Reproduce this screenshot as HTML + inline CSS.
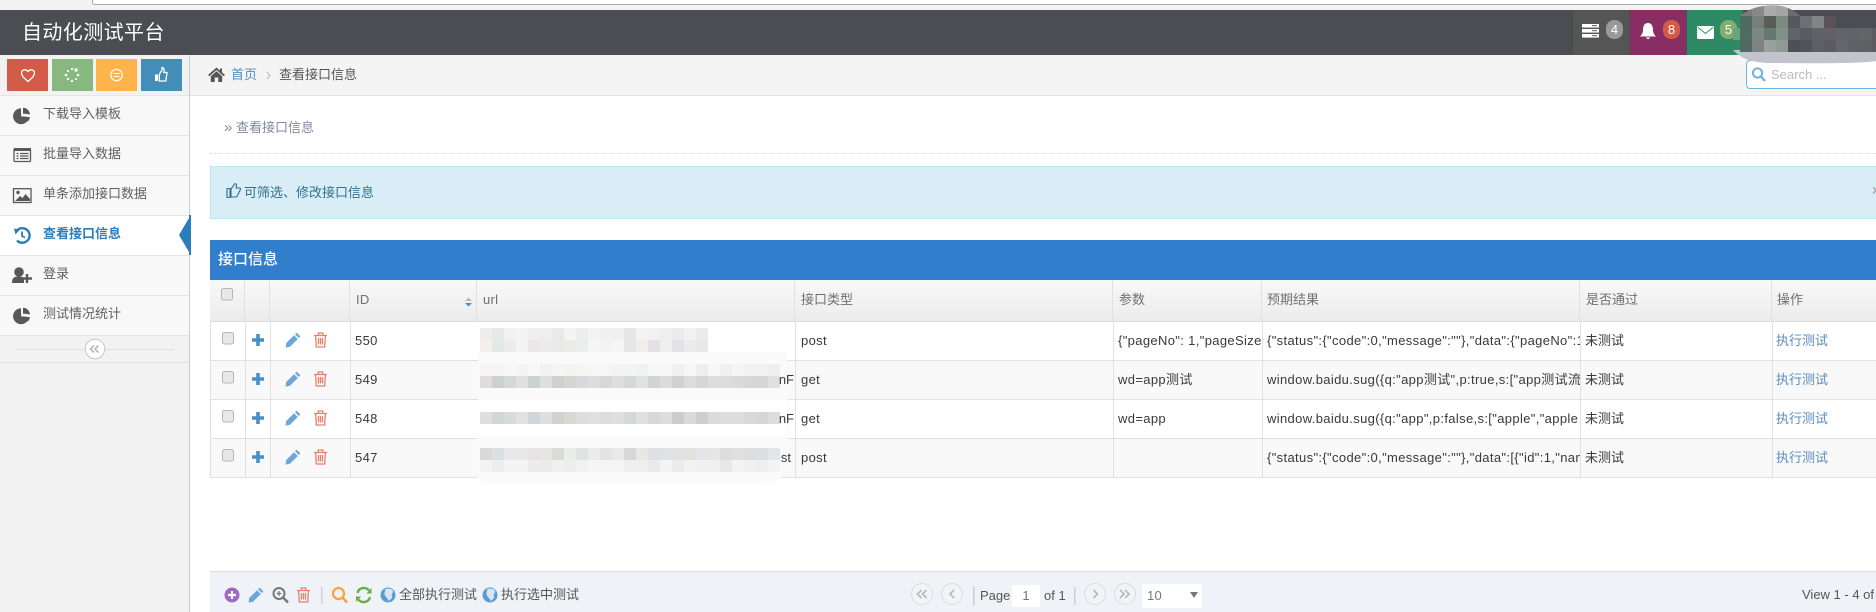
<!DOCTYPE html>
<html lang="zh">
<head>
<meta charset="utf-8">
<title>自动化测试平台</title>
<style>
html,body{margin:0;padding:0;width:1876px;height:612px;overflow:hidden;background:#fff}
body{position:relative;font-family:"Liberation Sans","Noto Sans CJK SC",sans-serif;font-size:13px;color:#393939}
.b{position:absolute}
.t{position:absolute;white-space:nowrap;line-height:20px;height:20px}
.h{color:#707070}
.m{color:#5f5f5f}
.c{overflow:hidden;color:#393939;letter-spacing:.35px}
.l{color:#5a8cbf}
.f{color:#555}
#mos rect{width:12px;height:12px}
#mos2 rect{width:12px;height:12px}
</style>
</head>
<body>
<!-- browser strip -->
<div class="b" style="left:0;top:0;width:1876px;height:10px;background:#f2f2f2"></div>
<div class="b" style="left:92px;top:0;width:1784px;height:4px;background:#fff;border-bottom:1px solid #aaa;border-left:1px solid #aaa;border-bottom-left-radius:3px"></div>
<!-- navbar -->
<div class="b" style="left:0;top:10px;width:1876px;height:45px;background:#4c4d52"></div>
<div class="t" style="left:22px;top:21px;font-size:20px;letter-spacing:.4px;line-height:24px;height:24px;color:#fff">自动化测试平台</div>
<div class="b" style="left:1573px;top:10px;width:56px;height:45px;background:#555"></div>
<div class="b" style="left:1630px;top:10px;width:56px;height:45px;background:#892e65"></div>
<div class="b" style="left:1687px;top:10px;width:56px;height:45px;background:#2e8965"></div>
<div class="t" style="left:1606px;top:20px;width:17px;height:19px;line-height:19px;border-radius:8px;background:#999;color:#fff;text-align:center;font-size:13px">4</div>
<div class="t" style="left:1663px;top:20px;width:17px;height:19px;line-height:19px;border-radius:8px;background:#d15b47;color:#fff;text-align:center;font-size:13px">8</div>
<div class="t" style="left:1720px;top:20px;width:17px;height:19px;line-height:19px;border-radius:8px;background:#82af6f;color:#fff;text-align:center;font-size:13px">5</div>

<!-- sidebar -->
<div class="b" style="left:0;top:55px;width:189px;height:557px;background:#f2f2f2;border-right:1px solid #ccc"></div>
<div class="b" style="left:7px;top:59px;width:41px;height:32px;background:#d15b47"></div>
<div class="b" style="left:52px;top:59px;width:41px;height:32px;background:#87b87f"></div>
<div class="b" style="left:96px;top:59px;width:41px;height:32px;background:#ffb44b"></div>
<div class="b" style="left:141px;top:59px;width:41px;height:32px;background:#438eb9"></div>
<div class="b" style="left:0;top:95px;width:189px;height:240px;background:#f8f8f8"></div>
<div class="b" style="left:0;top:215px;width:189px;height:40px;background:#fff"></div>
<div class="b" style="left:0;top:95px;width:189px;height:1px;background:#e5e5e5"></div>
<div class="b" style="left:0;top:135px;width:189px;height:1px;background:#e5e5e5"></div>
<div class="b" style="left:0;top:175px;width:189px;height:1px;background:#e5e5e5"></div>
<div class="b" style="left:0;top:215px;width:189px;height:1px;background:#e5e5e5"></div>
<div class="b" style="left:0;top:255px;width:189px;height:1px;background:#e5e5e5"></div>
<div class="b" style="left:0;top:295px;width:189px;height:1px;background:#e5e5e5"></div>
<div class="b" style="left:0;top:335px;width:189px;height:1px;background:#e5e5e5"></div>
<div class="b" style="left:0;top:362px;width:189px;height:1px;background:#e0e0e0"></div>
<div class="b" style="left:15px;top:349px;width:159px;height:1px;background:#e0e0e0"></div>
<div class="t m" style="left:43px;top:104px">下载导入模板</div>
<div class="t m" style="left:43px;top:144px">批量导入数据</div>
<div class="t m" style="left:43px;top:184px">单条添加接口数据</div>
<div class="t" style="left:43px;top:224px;color:#2b7dbc;font-weight:bold">查看接口信息</div>
<div class="t m" style="left:43px;top:264px">登录</div>
<div class="t m" style="left:43px;top:304px">测试情况统计</div>

<!-- breadcrumbs -->
<div class="b" style="left:190px;top:55px;width:1686px;height:40px;background:#f4f4f4;border-bottom:1px solid #e5e5e5"></div>
<div class="t" style="left:231px;top:65px;color:#4c8fbd">首页</div>
<div class="t" style="left:279px;top:65px;color:#555">查看接口信息</div>
<div class="b" style="left:1746px;top:60px;width:140px;height:27px;background:#fff;border:1px solid #6fb3e0;border-radius:4px"></div>
<div class="t" style="left:1771px;top:65px;color:#bbb">Search ...</div>

<!-- page header -->
<div class="t" style="left:224px;top:118px;color:#8089a0"><span style="font-size:15px">»</span> 查看接口信息</div>
<div class="b" style="left:210px;top:153px;width:1666px;border-top:1px dotted #d5d5d5"></div>

<!-- alert -->
<div class="b" style="left:210px;top:166px;width:1666px;height:51px;background:#d9edf7;border-top:1px solid #bce8f1;border-left:1px solid #bce8f1;border-bottom:1px solid #bce8f1"></div>
<div class="t" style="left:244px;top:183px;color:#31708f">可筛选、修改接口信息</div>
<div class="t" style="left:1872px;top:180px;color:#a0a8ac;font-size:14px;font-weight:bold">×</div>

<!-- panel -->
<div class="b" style="left:210px;top:240px;width:1666px;height:40px;background:#307ecc"></div>
<div class="t" style="left:218px;top:250px;font-size:15px;color:#fff;font-weight:500">接口信息</div>

<!-- table header -->
<div class="b" style="left:210px;top:280px;width:1666px;height:41px;background:linear-gradient(#f8f8f8,#ececec);border-bottom:1px solid #ddd"></div>
<div class="t h" style="left:356px;top:290px;letter-spacing:.3px">ID</div>
<div class="t h" style="left:483px;top:290px;letter-spacing:.3px">url</div>
<div class="t h" style="left:801px;top:290px">接口类型</div>
<div class="t h" style="left:1119px;top:290px">参数</div>
<div class="t h" style="left:1267px;top:290px">预期结果</div>
<div class="t h" style="left:1586px;top:290px">是否通过</div>
<div class="t h" style="left:1777px;top:290px">操作</div>

<!-- rows backgrounds -->
<div class="b" style="left:210px;top:361px;width:1666px;height:38px;background:#f9f9f9"></div>
<div class="b" style="left:210px;top:439px;width:1666px;height:38px;background:#f9f9f9"></div>
<div class="b" style="left:210px;top:360px;width:1666px;height:1px;background:#e1e1e1"></div>
<div class="b" style="left:210px;top:399px;width:1666px;height:1px;background:#e1e1e1"></div>
<div class="b" style="left:210px;top:438px;width:1666px;height:1px;background:#e1e1e1"></div>
<div class="b" style="left:210px;top:477px;width:1666px;height:1px;background:#e1e1e1"></div>
<!-- column lines header -->
<div class="b" style="left:244px;top:280px;width:1px;height:41px;background:#e1e1e1"></div>
<div class="b" style="left:269px;top:280px;width:1px;height:41px;background:#e1e1e1"></div>
<div class="b" style="left:349px;top:280px;width:1px;height:41px;background:#e1e1e1"></div>
<div class="b" style="left:476px;top:280px;width:1px;height:41px;background:#e1e1e1"></div>
<div class="b" style="left:794px;top:280px;width:1px;height:41px;background:#e1e1e1"></div>
<div class="b" style="left:1112px;top:280px;width:1px;height:41px;background:#e1e1e1"></div>
<div class="b" style="left:1261px;top:280px;width:1px;height:41px;background:#e1e1e1"></div>
<div class="b" style="left:1579px;top:280px;width:1px;height:41px;background:#e1e1e1"></div>
<div class="b" style="left:1771px;top:280px;width:1px;height:41px;background:#e1e1e1"></div>
<!-- column lines body -->
<div class="b" style="left:210px;top:321px;width:1px;height:157px;background:#e1e1e1"></div>
<div class="b" style="left:245px;top:321px;width:1px;height:157px;background:#e1e1e1"></div>
<div class="b" style="left:270px;top:321px;width:1px;height:157px;background:#e1e1e1"></div>
<div class="b" style="left:350px;top:321px;width:1px;height:157px;background:#e1e1e1"></div>
<div class="b" style="left:795px;top:321px;width:1px;height:157px;background:#e1e1e1"></div>
<div class="b" style="left:1113px;top:321px;width:1px;height:157px;background:#e1e1e1"></div>
<div class="b" style="left:1262px;top:321px;width:1px;height:157px;background:#e1e1e1"></div>
<div class="b" style="left:1580px;top:321px;width:1px;height:157px;background:#e1e1e1"></div>
<div class="b" style="left:1772px;top:321px;width:1px;height:157px;background:#e1e1e1"></div>

<!-- row text -->
<div class="t c" style="left:355px;top:331px;width:100px">550</div>
<div class="t c" style="left:355px;top:370px;width:100px">549</div>
<div class="t c" style="left:355px;top:409px;width:100px">548</div>
<div class="t c" style="left:355px;top:448px;width:100px">547</div>

<!-- url mosaic -->
<svg id="mos" class="b" style="left:0;top:0" width="1876" height="612" viewBox="0 0 1876 612">
<rect style="width:316px;height:30px" x="478" y="322" fill="#fff"/>
<path d="M478 352H786Q790 372 788 400Q790 420 788 440Q790 462 784 476Q775 484 740 484H500Q482 484 478 478Z" fill="#fafafa"/>
<rect style="width:309px;height:36px" x="478" y="400" fill="#fff"/>
<g fill="#eee">
<rect x="480" y="328" fill="#efecea"/><rect x="492" y="328" fill="#e6e8e9"/><rect x="504" y="328" fill="#f1f1f0"/><rect x="516" y="328" fill="#f3f4f3"/><rect x="528" y="328" fill="#efeeeb"/><rect x="540" y="328" fill="#eeeeec"/><rect x="552" y="328" fill="#e9e9e8"/><rect x="564" y="328" fill="#f3f5f3"/><rect x="576" y="328" fill="#eceeec"/><rect x="588" y="328" fill="#f3f3f3"/><rect x="600" y="328" fill="#f0f0f0"/><rect x="612" y="328" fill="#f0f0f0"/><rect x="624" y="328" fill="#e6e6e8"/><rect x="636" y="328" fill="#f4f3f0"/><rect x="648" y="328" fill="#f1f1f1"/><rect x="660" y="328" fill="#efefef"/><rect x="672" y="328" fill="#ebebeb"/><rect x="684" y="328" fill="#f1f1f1"/><rect x="696" y="328" fill="#ebebeb"/>
<rect x="480" y="340" fill="#f4efec"/><rect x="492" y="340" fill="#e3e8e9"/><rect x="504" y="340" fill="#ececec"/><rect x="516" y="340" fill="#f4f4f4"/><rect x="528" y="340" fill="#e9e7e7"/><rect x="540" y="340" fill="#eaebea"/><rect x="552" y="340" fill="#e8e9e8"/><rect x="564" y="340" fill="#ebebe9"/><rect x="576" y="340" fill="#ebeeec"/><rect x="588" y="340" fill="#f5f5f5"/><rect x="600" y="340" fill="#f4f3f3"/><rect x="612" y="340" fill="#f5f5f5"/><rect x="624" y="340" fill="#e6e5e8"/><rect x="636" y="340" fill="#eeeeeb"/><rect x="648" y="340" fill="#e3e1e3"/><rect x="660" y="340" fill="#edf0ef"/><rect x="672" y="340" fill="#e3e3e6"/><rect x="684" y="340" fill="#ebebeb"/><rect x="696" y="340" fill="#e8e8e8"/>
<rect x="480" y="364" fill="#f6f5f3"/><rect x="492" y="364" fill="#f5f5f5"/><rect x="504" y="364" fill="#f7f7f7"/><rect x="516" y="364" fill="#f4f4f4"/><rect x="528" y="364" fill="#f8f8f8"/><rect x="540" y="364" fill="#f2f2f2"/><rect x="552" y="364" fill="#f5f5f5"/><rect x="564" y="364" fill="#f3f3f2"/><rect x="576" y="364" fill="#f5f6f4"/><rect x="588" y="364" fill="#f6f6f6"/><rect x="600" y="364" fill="#f6f6f6"/><rect x="612" y="364" fill="#f2f3f3"/><rect x="624" y="364" fill="#f3f5f4"/><rect x="636" y="364" fill="#f0f1f1"/><rect x="648" y="364" fill="#f5f7f7"/><rect x="660" y="364" fill="#f6f6f6"/><rect x="672" y="364" fill="#f0f0f1"/><rect x="684" y="364" fill="#f6f6f6"/><rect x="696" y="364" fill="#eeeeee"/><rect x="708" y="364" fill="#f7f7f7"/><rect x="720" y="364" fill="#f0f0f0"/><rect x="732" y="364" fill="#f5f5f5"/><rect x="744" y="364" fill="#f2f2f0"/><rect x="756" y="364" fill="#f2f2f0"/><rect x="768" y="364" fill="#ecefee"/>
<rect x="480" y="376" fill="#e0dcd9"/><rect x="492" y="376" fill="#cbd0d2"/><rect x="504" y="376" fill="#d5d8d6"/><rect x="516" y="376" fill="#e2e0de"/><rect x="528" y="376" fill="#cad2d4"/><rect x="540" y="376" fill="#dfdfdf"/><rect x="552" y="376" fill="#d0d0cd"/><rect x="564" y="376" fill="#d6d5d1"/><rect x="576" y="376" fill="#d8d9df"/><rect x="588" y="376" fill="#deded9"/><rect x="600" y="376" fill="#d7d7d7"/><rect x="612" y="376" fill="#dededa"/><rect x="624" y="376" fill="#d5d7d9"/><rect x="636" y="376" fill="#dfe2de"/><rect x="648" y="376" fill="#d3d3d5"/><rect x="660" y="376" fill="#dcdbd9"/><rect x="672" y="376" fill="#d0d1d5"/><rect x="684" y="376" fill="#dcdcdc"/><rect x="696" y="376" fill="#d5d7d7"/><rect x="708" y="376" fill="#dddddd"/><rect x="720" y="376" fill="#dddbdb"/><rect x="732" y="376" fill="#dadada"/><rect x="744" y="376" fill="#d7d7d7"/><rect x="756" y="376" fill="#d6d6d6"/><rect x="768" y="376" fill="#e0e0dd"/>
<rect x="480" y="412" fill="#e2dedb"/><rect x="492" y="412" fill="#d0d6d9"/><rect x="504" y="412" fill="#d9dbd9"/><rect x="516" y="412" fill="#e3e1df"/><rect x="528" y="412" fill="#cfd7db"/><rect x="540" y="412" fill="#dfdfdf"/><rect x="552" y="412" fill="#d2d2cf"/><rect x="564" y="412" fill="#d8d8d3"/><rect x="576" y="412" fill="#dcdde2"/><rect x="588" y="412" fill="#e1e1dc"/><rect x="600" y="412" fill="#dcdcdc"/><rect x="612" y="412" fill="#e0dfdc"/><rect x="624" y="412" fill="#d3d9da"/><rect x="636" y="412" fill="#dfe1dd"/><rect x="648" y="412" fill="#d9d6d7"/><rect x="660" y="412" fill="#dfdddb"/><rect x="672" y="412" fill="#cccccd"/><rect x="684" y="412" fill="#dadada"/><rect x="696" y="412" fill="#cdcfce"/><rect x="708" y="412" fill="#dddada"/><rect x="720" y="412" fill="#dddddb"/><rect x="732" y="412" fill="#dddddb"/><rect x="744" y="412" fill="#d7dada"/><rect x="756" y="412" fill="#d6d6d6"/><rect x="768" y="412" fill="#dcdcdc"/>
<rect x="480" y="448" fill="#dcd8d6"/><rect x="492" y="448" fill="#dce0e3"/><rect x="504" y="448" fill="#e7e9e8"/><rect x="516" y="448" fill="#e7e9e8"/><rect x="528" y="448" fill="#e5e4e2"/><rect x="540" y="448" fill="#e5e5e4"/><rect x="552" y="448" fill="#dbdbdb"/><rect x="564" y="448" fill="#ebedeb"/><rect x="576" y="448" fill="#e1e3e3"/><rect x="588" y="448" fill="#ececec"/><rect x="600" y="448" fill="#e5e2e3"/><rect x="612" y="448" fill="#e9e9e9"/><rect x="624" y="448" fill="#d7d6da"/><rect x="636" y="448" fill="#e8e7e3"/><rect x="648" y="448" fill="#e0dfe3"/><rect x="660" y="448" fill="#e0e1e5"/><rect x="672" y="448" fill="#e3e2e3"/><rect x="684" y="448" fill="#e3e2df"/><rect x="696" y="448" fill="#e3e5e7"/><rect x="708" y="448" fill="#e6e6e6"/><rect x="720" y="448" fill="#dddddd"/><rect x="732" y="448" fill="#dfe0df"/><rect x="744" y="448" fill="#dfdede"/><rect x="756" y="448" fill="#dcdedf"/><rect x="768" y="448" fill="#e3e5e7"/>
<rect x="480" y="460" fill="#f3f3f3"/><rect x="492" y="460" fill="#ebeeee"/><rect x="504" y="460" fill="#f4f4f4"/><rect x="516" y="460" fill="#f4f4f4"/><rect x="528" y="460" fill="#ececec"/><rect x="540" y="460" fill="#ebebeb"/><rect x="552" y="460" fill="#f0f0ee"/><rect x="564" y="460" fill="#ededeb"/><rect x="576" y="460" fill="#f0f1f1"/><rect x="588" y="460" fill="#f5f5f5"/><rect x="600" y="460" fill="#f5f5f5"/><rect x="612" y="460" fill="#f5f5f5"/><rect x="624" y="460" fill="#eef0f0"/><rect x="636" y="460" fill="#eeeeee"/><rect x="648" y="460" fill="#e9e9ea"/><rect x="660" y="460" fill="#f4f4f4"/><rect x="672" y="460" fill="#ebebeb"/><rect x="684" y="460" fill="#f0f2f4"/><rect x="696" y="460" fill="#eff1f1"/><rect x="708" y="460" fill="#f0f0ee"/><rect x="720" y="460" fill="#e8e8e8"/><rect x="732" y="460" fill="#f3f3f3"/><rect x="744" y="460" fill="#eff0f0"/><rect x="756" y="460" fill="#edefef"/><rect x="768" y="460" fill="#f4f4f4"/>
</g>
</svg>

<div class="t c" style="left:700px;top:370px;width:94px;text-align:right;letter-spacing:0">nF</div>
<div class="t c" style="left:700px;top:409px;width:94px;text-align:right;letter-spacing:0">nF</div>
<div class="t c" style="left:700px;top:448px;width:91px;text-align:right;letter-spacing:0">st</div>

<div class="t c" style="left:801px;top:331px;width:100px">post</div>
<div class="t c" style="left:801px;top:370px;width:100px">get</div>
<div class="t c" style="left:801px;top:409px;width:100px">get</div>
<div class="t c" style="left:801px;top:448px;width:100px">post</div>
<div class="t c" style="left:1118px;top:331px;width:144px">{"pageNo": 1,"pageSize"</div>
<div class="t c" style="left:1118px;top:370px;width:144px">wd=app测试</div>
<div class="t c" style="left:1118px;top:409px;width:144px">wd=app</div>
<div class="t c" style="left:1267px;top:331px;width:313px">{"status":{"code":0,"message":""},"data":{"pageNo":1,"pageSize"</div>
<div class="t c" style="left:1267px;top:370px;width:313px">window.baidu.sug({q:"app测试",p:true,s:["app测试流程"</div>
<div class="t c" style="left:1267px;top:409px;width:313px">window.baidu.sug({q:"app",p:false,s:["apple","apple</div>
<div class="t c" style="left:1267px;top:448px;width:313px">{"status":{"code":0,"message":""},"data":[{"id":1,"name":""</div>
<div class="t c" style="left:1585px;top:331px;width:100px;letter-spacing:0">未测试</div>
<div class="t c" style="left:1585px;top:370px;width:100px;letter-spacing:0">未测试</div>
<div class="t c" style="left:1585px;top:409px;width:100px;letter-spacing:0">未测试</div>
<div class="t c" style="left:1585px;top:448px;width:100px;letter-spacing:0">未测试</div>
<div class="t l" style="left:1776px;top:331px">执行测试</div>
<div class="t l" style="left:1776px;top:370px">执行测试</div>
<div class="t l" style="left:1776px;top:409px">执行测试</div>
<div class="t l" style="left:1776px;top:448px">执行测试</div>

<!-- footer -->
<div class="b" style="left:210px;top:571px;width:1666px;height:41px;background:#eff3f8;border-top:1px solid #ddd"></div>
<div class="t f" style="left:399px;top:585px">全部执行测试</div>
<div class="t f" style="left:501px;top:585px">执行选中测试</div>
<div class="t f" style="left:980px;top:586px">Page</div>
<div class="b" style="left:1012px;top:585px;width:28px;height:22px;background:#fff"></div>
<div class="t" style="left:1012px;top:586px;width:28px;text-align:center;color:#777">1</div>
<div class="t f" style="left:1044px;top:586px">of 1</div>
<div class="b" style="left:1142px;top:584px;width:60px;height:24px;background:#fff"></div>
<div class="t" style="left:1147px;top:586px;color:#777;letter-spacing:.3px">10</div>
<div class="t f" style="left:1802px;top:585px">View 1 - 4 of</div>

<!-- icons -->
<svg class="b" style="left:0;top:0" width="1876" height="612" viewBox="0 0 1876 612">
<defs>
<g id="pencil"><path d="M11.6 0.6L15.4 4.4L13.8 6L10 2.2Z M9 3.2L12.8 7L5 14.8L0.6 15.6L1.2 11Z"/></g>
<g id="trash" fill="none" stroke-width="1.3"><path d="M1 3.5H14 M5.2 3.5V1H9.8V3.5 M2.6 3.5L3.3 15H11.7L12.4 3.5 M5.5 6V12.5 M7.5 6V12.5 M9.5 6V12.5"/></g>
<g id="plus"><path d="M6 0V12M0 6H12" stroke-width="3.6" fill="none"/></g>
<g id="cb"><rect x=".5" y=".5" width="11" height="11.5" rx="2" fill="#e8e8e8" stroke="#b5b5b5"/></g>
<g id="pie"><path d="M8 1.2A8 8 0 1 0 16 10.2L8 9.2Z"/><path d="M10 .6A7.6 7.6 0 0 1 17 7.4L10 6.6Z"/><path d="M10.2 9.4L17 10.2A8 8 0 0 1 15 14.4Z"/></g>
<g id="rowi">
<use href="#cb" x="222" y="0"/>
<use href="#plus" x="252" y="2" stroke="#478fca"/>
<use href="#pencil" x="285" y="0" fill="#6fa5d8"/>
<use href="#trash" x="313" y="0" stroke="#e5806c"/>
</g>
<g id="circ"><circle r="10.5" fill="#f2f3f5" stroke="#dcdcdc"/></g>
<clipPath id="dome"><path d="M1733 22Q1745 10 1758 7Q1775 3 1788 8Q1797 12 1800 16H1876V52H1733Z"/></clipPath>
</defs>

<!-- nav icons -->
<g fill="#fff">
<rect x="1582" y="24" width="17" height="3.6"/><rect x="1582" y="29" width="17" height="3.6"/><rect x="1582" y="34" width="17" height="3.6"/>
<rect x="1592" y="25" width="5" height="1.2" fill="#777"/><rect x="1592" y="30" width="5" height="1.2" fill="#777"/><rect x="1592" y="35" width="5" height="1.2" fill="#777"/>
<path d="M1648 23C1652 23 1653 27 1653 30C1653 33 1654.500 35 1656 36.500H1640C1641.500 35 1643 33 1643 30C1643 27 1644 23 1648 23ZM1646 37.500H1650C1650 39.500 1646 39.500 1646 37.500Z"/>
<rect x="1697" y="26" width="17" height="13" rx="1.500"/>
<path d="M1698 27.500L1705.500 33.500L1713 27.500" fill="none" stroke="#2e8965" stroke-width=".9"/>
</g>

<!-- blurred user block -->
<path d="M1733 50Q1745 64 1775 63Q1860 64 1876 61V50Z" fill="#c1c4cc"/>
<g clip-path="url(#dome)">
<rect x="1733" y="28" width="7" height="12" fill="#6aa579"/>
<g id="mos2">
<rect x="1740" y="4" fill="#787c7a"/><rect x="1752" y="4" fill="#888a8a"/><rect x="1764" y="4" fill="#ababab"/><rect x="1776" y="4" fill="#a4a4a4"/><rect x="1788" y="4" fill="#6a6b70"/>
<rect x="1740" y="16" fill="#4d6b60"/><rect x="1752" y="16" fill="#767f7c"/><rect x="1764" y="16" fill="#565e55"/><rect x="1776" y="16" fill="#7d8a82"/><rect x="1788" y="16" fill="#57585d"/><rect x="1800" y="16" fill="#6e6f75"/><rect x="1812" y="16" fill="#838488"/><rect x="1824" y="16" fill="#5b5158"/>
<rect x="1740" y="28" fill="#4f6c63"/><rect x="1752" y="28" fill="#7d8885"/><rect x="1764" y="28" fill="#64796f"/><rect x="1776" y="28" fill="#80918a"/><rect x="1788" y="28" fill="#626368"/><rect x="1800" y="28" fill="#5b5a60"/><rect x="1812" y="28" fill="#606166"/><rect x="1824" y="28" fill="#626066"/><rect x="1836" y="28" fill="#64636a"/><rect x="1848" y="28" fill="#5f6367"/><rect x="1860" y="28" fill="#636669"/><rect x="1872" y="28" fill="#5a5c60"/>
<rect x="1740" y="40" fill="#4f6a62"/><rect x="1752" y="40" fill="#7e8284"/><rect x="1764" y="40" fill="#9aa09c"/><rect x="1776" y="40" fill="#8f9998"/><rect x="1788" y="40" fill="#4f5055"/><rect x="1800" y="40" fill="#525358"/><rect x="1812" y="40" fill="#5e5f64"/><rect x="1824" y="40" fill="#5a5b60"/><rect x="1836" y="40" fill="#66666a"/><rect x="1848" y="40" fill="#606166"/><rect x="1860" y="40" fill="#5f6065"/><rect x="1872" y="40" fill="#5a5a60"/>
</g>
</g>

<!-- search icon -->
<circle cx="1757.500" cy="73" r="4.600" fill="none" stroke="#6fb3e0" stroke-width="2"/>
<path d="M1761 76.500L1765 81" stroke="#6fb3e0" stroke-width="2.400"/>

<!-- shortcut icons -->
<path d="M28 81.500C24 78 21.500 76 21.500 73C21.500 70 25.500 68.500 28 71.500C30.500 68.500 34.500 70 34.500 73C34.500 76 32 78 28 81.500Z" fill="none" stroke="#fff" stroke-width="1.300"/>
<g fill="#fff"><circle cx="72" cy="69" r="1.100"/><circle cx="76" cy="70" r="1.700"/><circle cx="78" cy="75" r="1.300"/><circle cx="76" cy="79" r="1"/><circle cx="72" cy="81" r="1.200"/><circle cx="68" cy="79" r="1.200"/><circle cx="66" cy="75" r="1.300"/><circle cx="68" cy="71" r="1.100"/></g>
<circle cx="116.500" cy="75" r="5.700" fill="none" stroke="#fff" stroke-width="1.200"/>
<path d="M113.500 73.500h6M113.500 76.500h6" stroke="#fff" stroke-width="1"/>
<path d="M155 74.500H158V81H155Z" fill="#fff"/>
<path d="M159.300 74.500L162 70V67.500C164 67.500 164.500 69.500 163.800 72.500H167L165.800 81H159.300Z" fill="none" stroke="#fff" stroke-width="1.300"/>

<!-- sidebar icons -->
<use href="#pie" x="13" y="107" fill="#585858"/>
<rect x="14" y="149" width="16.500" height="12.500" fill="none" stroke="#585858" stroke-width="1.300" rx="1"/>
<rect x="14" y="148" width="17" height="3" fill="#585858"/>
<path d="M16.500 153.500h2M20 153.500h8.500M16.500 156h2M20 156h8.500M16.500 158.500h2M20 158.500h8.500" stroke="#585858" stroke-width="1.200"/>
<rect x="13.500" y="188.700" width="17.500" height="13.800" fill="none" stroke="#585858" stroke-width="1.300"/>
<circle cx="18" cy="192.500" r="1.700" fill="#585858"/>
<path d="M15 201L20 196L22.500 198L25.500 194L30 199V201Z" fill="#585858"/>
<path d="M16.500 231A7.300 7.300 0 1 1 17 240.500" fill="none" stroke="#2b7dbc" stroke-width="2.400"/>
<path d="M14 228.500L20 229.500L15.500 234.500Z" fill="#2b7dbc"/>
<path d="M22 231.500V236L25 237.500" fill="none" stroke="#2b7dbc" stroke-width="1.800"/>
<path d="M179 235L189 218V252Z" fill="#2b7dbc"/>
<rect x="189" y="215" width="2" height="40" fill="#2b7dbc"/>
<circle cx="19" cy="272" r="4.800" fill="#585858"/>
<path d="M12 283C12 277 15 276.500 19 276.500C21 276.500 23 277 24 278V283Z" fill="#585858"/>
<path d="M27 274V283M22.500 278.500H32" stroke="#585858" stroke-width="2.400"/>
<use href="#pie" x="13" y="307" fill="#585858"/>

<!-- collapse -->
<circle cx="95" cy="349" r="9.700" fill="#fff" stroke="#c8c8c8"/>
<path d="M94 345.500L90.500 349L94 352.500M98.500 345.500L95 349L98.500 352.500" fill="none" stroke="#aaa" stroke-width="1.300"/>

<!-- home -->
<path d="M216.500 67.500L208 75L209.300 76.300L216.500 70L223.700 76.300L225 75L222 72.400V68.500H220V70.600Z" fill="#555"/>
<path d="M210.800 76.200L216.500 71.300L222.200 76.200V82H218.300V77.500H214.700V82H210.800Z" fill="#555"/>
<path d="M267 72L270 75.500L267 79" fill="none" stroke="#c5c5c5" stroke-width="1.400"/>

<!-- alert thumb -->
<path d="M227 188.500H230V197.500H227Z M231 189L234 185C234 183.500 236.500 183 236.500 185.500C236.500 187 236 188 236 188H240C241 189 240 190 240 190C240 191.500 239 192 239 192C239 193.500 238 194 238 194C238 196.500 236.500 197 235 197H231Z" fill="none" stroke="#31708f" stroke-width="1.100"/>

<!-- sort -->
<path d="M465 301L468.500 297.500L472 301Z" fill="#b8bcc0"/>
<path d="M465 303L468.500 306.500L472 303Z" fill="#478fca"/>

<!-- header checkbox and row icons -->
<use href="#cb" x="221" y="288"/>
<use href="#rowi" x="0" y="332"/>
<use href="#rowi" x="0" y="371"/>
<use href="#rowi" x="0" y="410"/>
<use href="#rowi" x="0" y="449"/>

<!-- footer icons -->
<circle cx="232" cy="595" r="7.500" fill="#a069c3"/>
<path d="M232 591V599M228 595H236" stroke="#fff" stroke-width="2.200"/>
<use href="#pencil" x="248" y="587" fill="#6fa5d8"/>
<circle cx="279" cy="593.500" r="5.500" fill="none" stroke="#777" stroke-width="2"/>
<path d="M283 597.500L288 602.500" stroke="#777" stroke-width="2.500"/>
<path d="M279 591V596M276.500 593.500H281.500" stroke="#777" stroke-width="1.300"/>
<use href="#trash" x="296" y="587" stroke="#e5806c"/>
<rect x="321" y="587" width="1.500" height="17" fill="#ccd3da"/>
<circle cx="338.500" cy="593.500" r="5.500" fill="none" stroke="#ff9e3f" stroke-width="2.200"/>
<path d="M342.500 597.500L347 602.500" stroke="#ff9e3f" stroke-width="2.600"/>
<path d="M357.500 593A6.500 6.500 0 0 1 369 590.500M370 597A6.500 6.500 0 0 1 358.500 599.500" fill="none" stroke="#69aa46" stroke-width="2.400"/>
<path d="M366.500 593.500L371.500 593.500V588Z M361 596.500L356 596.500V602Z" fill="#69aa46"/>
<circle cx="388" cy="595" r="7.500" fill="#5a9bd4"/>
<path d="M385 589C387 588.500 392 588 393 591C393.500 593 391 594 392 596C393 598 390 600 388.500 601C388 598 385 597 384.500 594C384 592 386 591 385 589Z" fill="#eff3f8" opacity=".85"/>
<circle cx="490" cy="595" r="7.500" fill="#5a9bd4"/>
<path d="M487 589C489 588.500 494 588 495 591C495.500 593 493 594 494 596C495 598 492 600 490.500 601C490 598 487 597 486.500 594C486 592 488 591 487 589Z" fill="#eff3f8" opacity=".85"/>

<!-- pager -->
<use href="#circ" x="922" y="594"/>
<use href="#circ" x="952" y="594"/>
<use href="#circ" x="1095" y="594"/>
<use href="#circ" x="1125" y="594"/>
<g fill="none" stroke="#b8b8b8" stroke-width="1.600">
<path d="M921.500 590L917.500 594L921.500 598M926.500 590L922.500 594L926.500 598"/>
<path d="M954 590L950 594L954 598"/>
<path d="M1093.500 590L1097.500 594L1093.500 598"/>
<path d="M1120 590L1124 594L1120 598M1125 590L1129 594L1125 598"/>
</g>
<rect x="973" y="587" width="1.500" height="18" fill="#c5ced6"/>
<rect x="1074" y="587" width="1.500" height="18" fill="#c5ced6"/>
<path d="M1190 592H1198L1194 598Z" fill="#777"/>
</svg>
</body>
</html>
